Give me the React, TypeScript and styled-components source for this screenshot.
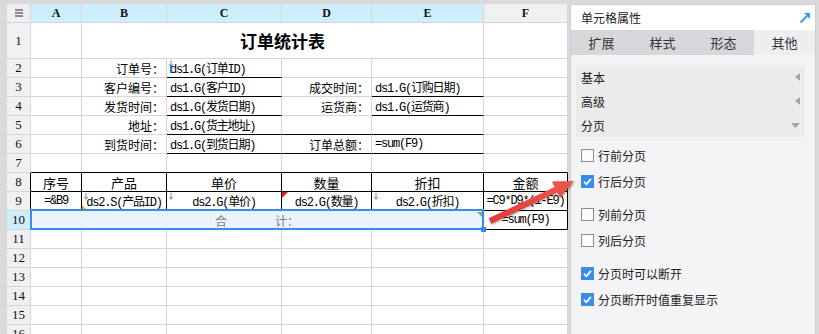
import React from "react";
import styled, { createGlobalStyle, css } from "styled-components";

const GRID = "#d6d6d6";
const CJK = `"Noto Sans CJK SC", "Noto Sans", sans-serif`;
const MONO = `"Liberation Mono", "Noto Sans CJK SC", monospace`;

const Global = createGlobalStyle`
  html, body { margin: 0; padding: 0; background: #dadada; }
  body { font-family: ${CJK}; }
  #root { width: 819px; height: 334px; }
`;

const Page = styled.div`
  position: relative;
  display: flex;
  align-items: flex-start;
  width: 819px;
  height: 334px;
  overflow: hidden;
  background: #dadada;
`;

const SheetArea = styled.div`
  flex: none;
  height: 100%;
  box-sizing: border-box;
  padding: 4px 0 0 7px;
  overflow: hidden;
`;

const Sheet = styled.div`
  display: grid;
  grid-template-columns: 24px 51px 85px 115px 90px 112px 84px;
  grid-template-rows: 19px 36px;
  grid-auto-rows: 19px;
  background: #fff;
`;

const Corner = styled.div`
  box-sizing: border-box;
  background: #efeff1;
  border-right: 1px solid ${GRID};
  border-bottom: 1px solid ${GRID};
  display: flex;
  align-items: center;
  justify-content: center;
`;

const ColHead = styled.div<{ $active?: boolean }>`
  box-sizing: border-box;
  background: ${(p) => (p.$active ? "#cdeefa" : "#f0f0f0")};
  border-right: 1px solid ${GRID};
  border-bottom: 1px solid ${GRID};
  display: flex;
  align-items: center;
  justify-content: center;
  font: bold 12px "Liberation Serif", serif;
  color: #111;
`;

const RowNum = styled.div<{ $active?: boolean; $rb?: boolean }>`
  box-sizing: border-box;
  background: ${(p) => (p.$active ? "#cdeefa" : "#f0f0f2")};
  border-right: 1px solid ${(p) => (p.$rb ? "#000" : GRID)};
  border-bottom: 1px solid ${GRID};
  display: flex;
  align-items: center;
  justify-content: center;
  font: 13px "Liberation Serif", serif;
  color: #111;
`;

type Kind = "plain" | "label" | "code" | "head" | "title";

const kindCss: Record<Kind, ReturnType<typeof css>> = {
  plain: css``,
  label: css`
    font: 12px ${CJK};
  `,
  code: css`
    font: 12px ${MONO};
    letter-spacing: -1.2px;
  `,
  head: css`
    font: 13px ${CJK};
  `,
  title: css`
    font: bold 17px ${CJK};
  `,
};

const Cell = styled.div<{
  $span?: number;
  $bb?: boolean;
  $rb?: boolean;
  $kind?: Kind;
  $align?: "left" | "center" | "right";
}>`
  position: relative;
  box-sizing: border-box;
  min-width: 0;
  grid-column: span ${(p) => p.$span ?? 1};
  border-right: 1px solid ${(p) => (p.$rb ? "#000" : GRID)};
  border-bottom: 1px solid ${(p) => (p.$bb ? "#000" : GRID)};
  display: flex;
  align-items: center;
  justify-content: ${(p) =>
    p.$align === "right" ? "flex-end" : p.$align === "center" ? "center" : "flex-start"};
  padding: 0 ${(p) => (p.$align === "right" ? "2px" : "3px")};
  white-space: nowrap;
  line-height: 1;
  color: #000;
  ${(p) => kindCss[p.$kind ?? "plain"]}
`;

const SelCell = styled(Cell)`
  z-index: 2;
  background: #ebf4fd;
  color: #808080;
  white-space: pre;
  &::after {
    content: "";
    position: absolute;
    top: -2px;
    left: -1px;
    right: -1px;
    bottom: -1px;
    border: 2px solid #3a8cea;
    pointer-events: none;
  }
`;

const Handle = styled.span`
  position: absolute;
  right: -3px;
  bottom: -3px;
  width: 5px;
  height: 5px;
  background: #3a8cea;
  z-index: 3;
`;

const Corner3 = styled.span<{ $pos: "tl" | "tr" | "bl"; $color: string; $size?: number }>`
  position: absolute;
  width: 0;
  height: 0;
  ${(p) => {
    const s = p.$size ?? 5;
    if (p.$pos === "tl")
      return css`
        top: 0;
        left: 0;
        border-top: ${s}px solid ${p.$color};
        border-right: ${s}px solid transparent;
      `;
    if (p.$pos === "tr")
      return css`
        top: 1px;
        right: 1px;
        border-top: ${s}px solid ${p.$color};
        border-left: ${s}px solid transparent;
      `;
    return css`
      bottom: 0;
      left: 0;
      border-bottom: ${s}px solid ${p.$color};
      border-right: ${s}px solid transparent;
    `;
  }}
`;

const MarkIcon = styled.svg`
  position: absolute;
  top: 1px;
  left: 1px;
`;

const Cursor = styled.span`
  position: absolute;
  left: 3px;
  top: 6px;
  width: 2px;
  height: 8px;
  background: #2a6fe0;
`;

const DownMark = () => (
  <MarkIcon width="6" height="7" viewBox="0 0 6 7">
    <path d="M3 0 V6 M1 4 L3 6.3 L5 4" stroke="#8a8a8a" strokeWidth="1" fill="none" />
  </MarkIcon>
);

/* ---------------- Panel ---------------- */

const Panel = styled.aside`
  flex: none;
  width: 246px;
  height: 330px;
  margin: 4px 0 0 2px;
  box-sizing: border-box;
  border: 1px solid #cdcdcd;
  border-bottom: none;
  background: #f4f4f6;
  display: flex;
  flex-direction: column;
`;

const TitleBar = styled.div`
  height: 25px;
  flex: none;
  background: #fff;
  display: flex;
  align-items: center;
  justify-content: space-between;
  padding: 0 4px 0 10px;
  font: 12px ${CJK};
  color: #222;
`;

const Tabs = styled.div`
  height: 25px;
  flex: none;
  display: grid;
  grid-template-columns: repeat(4, 1fr);
  background: #d6d7da;
`;

const Tab = styled.div<{ $active?: boolean }>`
  display: flex;
  align-items: center;
  justify-content: center;
  background: ${(p) => (p.$active ? "#eeeef1" : "transparent")};
  font: 13px ${CJK};
  color: #333;
`;

const PanelBody = styled.div`
  display: flex;
  flex-direction: column;
  padding: 10px 10px 0 5px;
`;

const Accordion = styled.div`
  background: #ebebeb;
  display: flex;
  flex-direction: column;
`;

const AccItem = styled.div`
  height: 24px;
  display: flex;
  align-items: center;
  justify-content: space-between;
  padding: 0 5px;
  font: 12px ${CJK};
  color: #222;
`;

const CheckGroups = styled.div`
  display: flex;
  flex-direction: column;
  gap: 7px;
  margin-top: 5px;
  padding-left: 5px;
`;

const CheckGroup = styled.div`
  display: flex;
  flex-direction: column;
`;

const CheckRow = styled.div`
  height: 26px;
  display: flex;
  align-items: center;
  gap: 4px;
  font: 12px ${CJK};
  color: #222;
`;

const Box = styled.span<{ $checked?: boolean }>`
  width: 13px;
  height: 13px;
  flex: none;
  box-sizing: border-box;
  border: 1px solid ${(p) => (p.$checked ? "#3a8de6" : "#8e8e8e")};
  background: ${(p) => (p.$checked ? "#3a8de6" : "#fbfbfb")};
  display: flex;
  align-items: center;
  justify-content: center;
`;

const Overlay = styled.svg`
  position: absolute;
  left: 0;
  top: 0;
  pointer-events: none;
  z-index: 10;
`;

const Check = ({ checked, label }: { checked?: boolean; label: string }) => (
  <CheckRow>
    <Box $checked={checked}>
      {checked && (
        <svg width="11" height="11" viewBox="0 0 11 11">
          <path d="M2 5.8 L4.4 8.2 L9 2.8" stroke="#fff" strokeWidth="1.8" fill="none" />
        </svg>
      )}
    </Box>
    {label}
  </CheckRow>
);

const LeftTri = () => (
  <svg width="5" height="8" viewBox="0 0 5 8">
    <path d="M5 0 L0 4 L5 8 Z" fill="#a3a3a3" />
  </svg>
);

const DownTri = () => (
  <svg width="9" height="5" viewBox="0 0 9 5">
    <path d="M0 0 L9 0 L4.5 5 Z" fill="#a3a3a3" />
  </svg>
);

const letters = ["A", "B", "C", "D", "E"];

export default function App() {
  const blankRows = [11, 12, 13, 14, 15, 16];
  return (
    <>
      <Global />
      <Page>
        <SheetArea>
          <Sheet>
            <Corner>
              <svg width="8" height="8" viewBox="0 0 8 8">
                <rect x="0" y="0" width="8" height="2" fill="#8a8a8a" />
                <rect x="0" y="3" width="8" height="2" fill="#8a8a8a" />
                <rect x="0" y="6" width="8" height="2" fill="#8a8a8a" />
              </svg>
            </Corner>
            {letters.map((l) => (
              <ColHead key={l} $active>
                {l}
              </ColHead>
            ))}
            <ColHead>F</ColHead>

            {/* row 1 */}
            <RowNum>1</RowNum>
            <Cell />
            <Cell $span={4} $kind="title" $align="center">
              订单统计表
            </Cell>
            <Cell />

            {/* row 2 */}
            <RowNum>2</RowNum>
            <Cell />
            <Cell $kind="label" $align="right">订单号：</Cell>
            <Cell $kind="code" $bb>
              <DownMark />
              <Cursor />
              ds1.G(订单ID)
            </Cell>
            <Cell />
            <Cell />
            <Cell />

            {/* row 3 */}
            <RowNum>3</RowNum>
            <Cell />
            <Cell $kind="label" $align="right">客户编号：</Cell>
            <Cell $kind="code" $bb>ds1.G(客户ID)</Cell>
            <Cell $kind="label" $align="right">成交时间：</Cell>
            <Cell $kind="code" $bb>ds1.G(订购日期)</Cell>
            <Cell />

            {/* row 4 */}
            <RowNum>4</RowNum>
            <Cell />
            <Cell $kind="label" $align="right">发货时间：</Cell>
            <Cell $kind="code" $bb>ds1.G(发货日期)</Cell>
            <Cell $kind="label" $align="right">运货商：</Cell>
            <Cell $kind="code" $bb>ds1.G(运货商)</Cell>
            <Cell />

            {/* row 5 */}
            <RowNum>5</RowNum>
            <Cell />
            <Cell $kind="label" $align="right">地址：</Cell>
            <Cell $kind="code" $bb>ds1.G(货主地址)</Cell>
            <Cell $bb />
            <Cell $bb />
            <Cell />

            {/* row 6 */}
            <RowNum>6</RowNum>
            <Cell />
            <Cell $kind="label" $align="right">到货时间：</Cell>
            <Cell $kind="code" $bb>ds1.G(到货日期)</Cell>
            <Cell $kind="label" $align="right" $bb>订单总额：</Cell>
            <Cell $kind="code" $bb>=sum(F9)</Cell>
            <Cell />

            {/* row 7 */}
            <RowNum>7</RowNum>
            <Cell $bb />
            <Cell $bb />
            <Cell $bb />
            <Cell $bb />
            <Cell $bb />
            <Cell $bb />

            {/* row 8 */}
            <RowNum $rb>8</RowNum>
            {["序号", "产品", "单价", "数量", "折扣", "金额"].map((h) => (
              <Cell key={h} $kind="head" $align="center" $bb $rb>
                {h}
              </Cell>
            ))}

            {/* row 9 */}
            <RowNum $rb>9</RowNum>
            <Cell $kind="code" $align="center" $bb $rb>=&amp;B9</Cell>
            <Cell $kind="code" $align="center" $bb $rb>
              <DownMark />
              <Corner3 $pos="bl" $color="#f0a800" />
              ds2.S(产品ID)
            </Cell>
            <Cell $kind="code" $align="center" $bb $rb>
              <DownMark />
              ds2.G(单价)
            </Cell>
            <Cell $kind="code" $align="center" $bb $rb>
              <Corner3 $pos="tl" $color="#e0202a" $size={6} />
              ds2.G(数量)
            </Cell>
            <Cell $kind="code" $align="center" $bb $rb>
              <DownMark />
              ds2.G(折扣)
            </Cell>
            <Cell $kind="code" $align="center" $bb $rb>=C9*D9*(1-E9)</Cell>

            {/* row 10 */}
            <RowNum $active>10</RowNum>
            <SelCell $span={5} $kind="label" $align="center">
              {"合　　　　计："}
              <Corner3 $pos="tr" $color="#5cc05c" />
              <Handle />
            </SelCell>
            <Cell $kind="code" $align="center" $bb $rb>=sum(F9)</Cell>

            {blankRows.map((r) => (
              <React.Fragment key={r}>
                <RowNum>{r}</RowNum>
                <Cell />
                <Cell />
                <Cell />
                <Cell />
                <Cell />
                <Cell />
              </React.Fragment>
            ))}
          </Sheet>
        </SheetArea>

        <Panel>
          <TitleBar>
            单元格属性
            <svg width="12" height="12" viewBox="0 0 12 12">
              <path d="M1.5 10.5 L8 4" stroke="#3d9be9" strokeWidth="2" fill="none" />
              <path d="M5 1 L11 1 L11 7 Z" fill="#3d9be9" />
            </svg>
          </TitleBar>
          <Tabs>
            <Tab>扩展</Tab>
            <Tab>样式</Tab>
            <Tab>形态</Tab>
            <Tab $active>其他</Tab>
          </Tabs>
          <PanelBody>
            <Accordion>
              <AccItem>
                基本
                <LeftTri />
              </AccItem>
              <AccItem>
                高级
                <LeftTri />
              </AccItem>
              <AccItem>
                分页
                <DownTri />
              </AccItem>
            </Accordion>
            <CheckGroups>
              <CheckGroup>
                <Check label="行前分页" />
                <Check label="行后分页" checked />
              </CheckGroup>
              <CheckGroup>
                <Check label="列前分页" />
                <Check label="列后分页" />
              </CheckGroup>
              <CheckGroup>
                <Check label="分页时可以断开" checked />
                <Check label="分页断开时值重复显示" checked />
              </CheckGroup>
            </CheckGroups>
          </PanelBody>
        </Panel>

        <Overlay width="819" height="334" viewBox="0 0 819 334">
          <defs>
            <linearGradient id="arr" x1="0" y1="1" x2="1" y2="0">
              <stop offset="0" stopColor="#e23a35" />
              <stop offset="1" stopColor="#f0564c" />
            </linearGradient>
          </defs>
          <polygon
            points="488.7,218.3 554.6,186.9 552.0,181.5 574,181 559.8,197.7 557.2,192.3 491.3,223.7"
            fill="url(#arr)"
            style={{ filter: "drop-shadow(1px 1px 1px rgba(0,0,0,0.35))" }}
          />
        </Overlay>
      </Page>
    </>
  );
}
